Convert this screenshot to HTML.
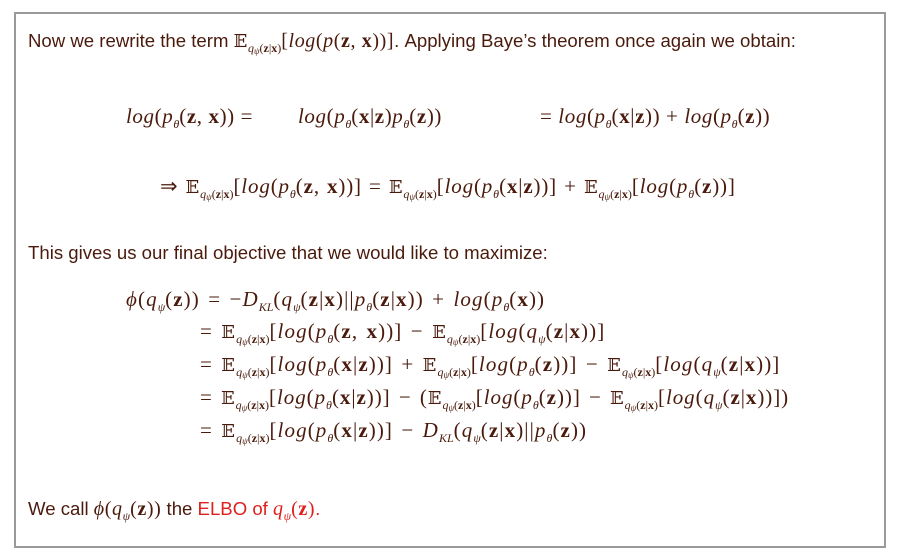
<!DOCTYPE html>
<html><head><meta charset="utf-8"><style>
body{margin:0;width:900px;height:552px;background:#fff;position:relative;overflow:hidden;color:#4a1a0c}
.frame{position:absolute;left:14px;top:12px;width:872px;height:536px;border:2px solid #9a9a9a;box-sizing:border-box}
.t{position:absolute;white-space:nowrap;font-family:"Liberation Sans",sans-serif;font-size:18.6px;line-height:20px}
.m{position:absolute;white-space:nowrap;font-family:"Liberation Serif",serif;font-size:21px;line-height:22px;letter-spacing:0.6px}
.w{letter-spacing:1.1px;word-spacing:2px}
.w2{letter-spacing:0.85px;word-spacing:1px}
.t .m{font-size:20px}
i{font-style:italic}
b{font-weight:bold}
sub{font-size:12px;vertical-align:-5px;line-height:0;letter-spacing:0}
sub sub{font-size:9px;vertical-align:-2px}
.E{font-family:"DejaVu Serif","DejaVu Sans",serif;font-size:18px}
.r{color:#e0201c}
</style></head><body>
<div class="frame"></div>

<div class="t" style="left:28px;top:30px">Now we rewrite the term <span class="m" style="position:static"><span class="E">𝔼</span><sub><i>q</i><sub><i>ψ</i></sub>(<b>z</b>|<b>x</b>)</sub>[<i>log</i>(<i>p</i>(<b>z</b>, <b>x</b>))]</span>. Applying Baye’s theorem once again we obtain:</div>

<div class="m" style="left:126px;top:105px"><i>log</i>(<i>p<sub>θ</sub></i>(<b>z</b>, <b>x</b>)) =</div>
<div class="m" style="left:298px;top:105px"><i>log</i>(<i>p<sub>θ</sub></i>(<b>x</b>|<b>z</b>)<i>p<sub>θ</sub></i>(<b>z</b>))</div>
<div class="m" style="left:540px;top:105px">= <i>log</i>(<i>p<sub>θ</sub></i>(<b>x</b>|<b>z</b>)) + <i>log</i>(<i>p<sub>θ</sub></i>(<b>z</b>))</div>

<div class="m w2" style="left:160px;top:175px">⇒&nbsp;<span class="E">𝔼</span><sub><i>q</i><sub><i>ψ</i></sub>(<b>z</b>|<b>x</b>)</sub>[<i>log</i>(<i>p<sub>θ</sub></i>(<b>z</b>, <b>x</b>))] = <span class="E">𝔼</span><sub><i>q</i><sub><i>ψ</i></sub>(<b>z</b>|<b>x</b>)</sub>[<i>log</i>(<i>p<sub>θ</sub></i>(<b>x</b>|<b>z</b>))] + <span class="E">𝔼</span><sub><i>q</i><sub><i>ψ</i></sub>(<b>z</b>|<b>x</b>)</sub>[<i>log</i>(<i>p<sub>θ</sub></i>(<b>z</b>))]</div>

<div class="t" style="left:28px;top:243px">This gives us our final objective that we would like to maximize:</div>

<div class="m w" style="left:126px;top:288px"><i>ϕ</i>(<i>q<sub>ψ</sub></i>(<b>z</b>)) = −<i>D<sub>KL</sub></i>(<i>q<sub>ψ</sub></i>(<b>z</b>|<b>x</b>)||<i>p<sub>θ</sub></i>(<b>z</b>|<b>x</b>)) + <i>log</i>(<i>p<sub>θ</sub></i>(<b>x</b>))</div>
<div class="m w" style="left:200px;top:320px">= <span class="E">𝔼</span><sub><i>q</i><sub><i>ψ</i></sub>(<b>z</b>|<b>x</b>)</sub>[<i>log</i>(<i>p<sub>θ</sub></i>(<b>z</b>, <b>x</b>))] − <span class="E">𝔼</span><sub><i>q</i><sub><i>ψ</i></sub>(<b>z</b>|<b>x</b>)</sub>[<i>log</i>(<i>q<sub>ψ</sub></i>(<b>z</b>|<b>x</b>))]</div>
<div class="m w" style="left:200px;top:353px">= <span class="E">𝔼</span><sub><i>q</i><sub><i>ψ</i></sub>(<b>z</b>|<b>x</b>)</sub>[<i>log</i>(<i>p<sub>θ</sub></i>(<b>x</b>|<b>z</b>))] + <span class="E">𝔼</span><sub><i>q</i><sub><i>ψ</i></sub>(<b>z</b>|<b>x</b>)</sub>[<i>log</i>(<i>p<sub>θ</sub></i>(<b>z</b>))] − <span class="E">𝔼</span><sub><i>q</i><sub><i>ψ</i></sub>(<b>z</b>|<b>x</b>)</sub>[<i>log</i>(<i>q<sub>ψ</sub></i>(<b>z</b>|<b>x</b>))]</div>
<div class="m w" style="left:200px;top:386px;letter-spacing:0.95px">= <span class="E">𝔼</span><sub><i>q</i><sub><i>ψ</i></sub>(<b>z</b>|<b>x</b>)</sub>[<i>log</i>(<i>p<sub>θ</sub></i>(<b>x</b>|<b>z</b>))] − (<span class="E">𝔼</span><sub><i>q</i><sub><i>ψ</i></sub>(<b>z</b>|<b>x</b>)</sub>[<i>log</i>(<i>p<sub>θ</sub></i>(<b>z</b>))] − <span class="E">𝔼</span><sub><i>q</i><sub><i>ψ</i></sub>(<b>z</b>|<b>x</b>)</sub>[<i>log</i>(<i>q<sub>ψ</sub></i>(<b>z</b>|<b>x</b>))])</div>
<div class="m w" style="left:200px;top:419px">= <span class="E">𝔼</span><sub><i>q</i><sub><i>ψ</i></sub>(<b>z</b>|<b>x</b>)</sub>[<i>log</i>(<i>p<sub>θ</sub></i>(<b>x</b>|<b>z</b>))] − <i>D<sub>KL</sub></i>(<i>q<sub>ψ</sub></i>(<b>z</b>|<b>x</b>)||<i>p<sub>θ</sub></i>(<b>z</b>))</div>

<div class="t" style="left:28px;top:498px">We call <span class="m" style="position:static"><i>ϕ</i>(<i>q<sub>ψ</sub></i>(<b>z</b>))</span> the <span class="r">ELBO of <span class="m" style="position:static"><i>q<sub>ψ</sub></i>(<b>z</b>)</span>.</span></div>
</body></html>
